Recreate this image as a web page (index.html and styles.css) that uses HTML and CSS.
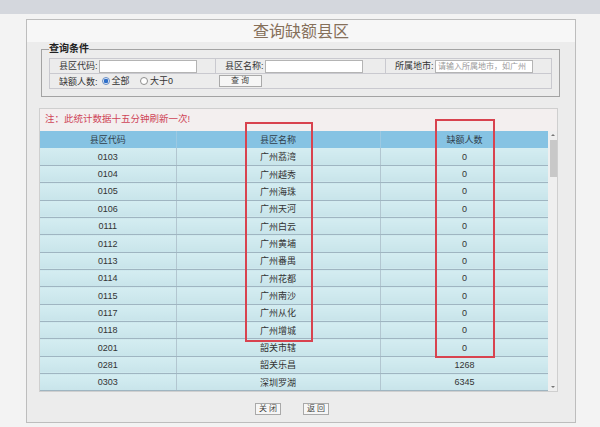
FILE: index.html
```html
<!DOCTYPE html>
<html lang="zh-CN">
<head>
    <meta charset="UTF-8">
    <title>查询缺额县区</title>
    <link rel="stylesheet" href="styles.css">
</head>
<body>

    <!-- 顶部灰条 -->
    <div class="topbar"></div>

    <div class="panel">
        <h1 class="title">查询缺额县区</h1>

        <div class="content">
            <!-- 查询条件 -->
            <fieldset class="query">
                <legend>查询条件</legend>
                <table class="query-table">
                    <tr>
                        <td class="cell-a"><span class="label">县区代码:</span><input type="text" class="field"></td>
                        <td class="cell-b"><span class="label">县区名称:</span><input type="text" class="field"></td>
                        <td class="cell-c"><span class="label">所属地市:</span><input type="text" class="field" placeholder="请输入所属地市，如广州"></td>
                    </tr>
                    <tr class="row-2">
                        <td class="cell-a">
                            <span class="label">缺额人数:</span>
                            <label class="opt"><input type="radio" name="num" checked>全部</label>
                            <label class="opt"><input type="radio" name="num">大于0</label>
                        </td>
                        <td class="cell-btn" colspan="2"><button class="btn btn-query">查 询</button></td>
                    </tr>
                </table>
            </fieldset>

            <!-- 结果列表 -->
            <div class="result">
                <div class="note">注：此统计数据十五分钟刷新一次!</div>
                <div class="grid-wrap">
                    <div class="grid">
                        <table class="data">
                            <thead>
                                <tr><th class="c1">县区代码</th><th class="c2">县区名称</th><th class="c3">缺额人数</th></tr>
                            </thead>
                            <tbody>
                                <tr><td>0103</td><td>广州荔湾</td><td>0</td></tr>
                                <tr><td>0104</td><td>广州越秀</td><td>0</td></tr>
                                <tr><td>0105</td><td>广州海珠</td><td>0</td></tr>
                                <tr><td>0106</td><td>广州天河</td><td>0</td></tr>
                                <tr><td>0111</td><td>广州白云</td><td>0</td></tr>
                                <tr><td>0112</td><td>广州黄埔</td><td>0</td></tr>
                                <tr><td>0113</td><td>广州番禺</td><td>0</td></tr>
                                <tr><td>0114</td><td>广州花都</td><td>0</td></tr>
                                <tr><td>0115</td><td>广州南沙</td><td>0</td></tr>
                                <tr><td>0117</td><td>广州从化</td><td>0</td></tr>
                                <tr><td>0118</td><td>广州增城</td><td>0</td></tr>
                                <tr><td>0201</td><td>韶关市辖</td><td>0</td></tr>
                                <tr><td>0281</td><td>韶关乐昌</td><td>1268</td></tr>
                                <tr><td>0303</td><td>深圳罗湖</td><td>6345</td></tr>
                            </tbody>
                        </table>
                    </div>
                    <!-- 滚动条 -->
                    <div class="scrollbar">
                        <span class="arrow arrow-up"></span>
                        <span class="thumb"></span>
                        <span class="arrow arrow-down"></span>
                    </div>
                </div>
            </div>

            <div class="actions">
                <button class="btn">关 闭</button>
                <button class="btn">返 回</button>
            </div>
        </div>

        <!-- 红色标注框 -->
        <div class="mark mark-name"></div>
        <div class="mark mark-num"></div>
    </div>

</body>
</html>
```

FILE: styles.css
```css
/* 基础 */
* {
    margin: 0;
    padding: 0;
    box-sizing: border-box;
}

body {
    background-color: #f3f3f3;
    font-family: "Liberation Sans", "Noto Sans CJK SC", sans-serif;
    color: #333;
}

.topbar {
    height: 14px;
    background-color: #d4d7dd;
}

/* 主面板 */
.panel {
    position: relative;
    width: 550px;
    margin: 5px 0 0 26px;
    border: 1px solid #bdbdbd;
    background-color: #f7f7f7;
}

.title {
    height: 22px;
    line-height: 23px;
    text-align: center;
    font-size: 16px;
    font-weight: normal;
    color: #86705a;
}

.content {
    background-color: #ececec;
    padding: 1px 0 7px 0;
}

/* 查询条件 */
.query {
    margin: 0 14px 0 14px;
    width: 519px;
    border: 1px solid #a3a3a3;
    padding: 3px 7px 7px 7px;
}

.query legend {
    font-size: 10px;
    font-weight: bold;
    line-height: 12px;
    color: #222;
    margin-left: 0;
    padding: 0;
}

.query-table {
    width: 503px;
    border-collapse: collapse;
    border: 1px solid #c9c9cf;
    font-size: 9px;
}

.query-table td {
    height: 15px;
    padding: 0 0 0 9px;
    vertical-align: middle;
    white-space: nowrap;
}

.query-table tr:first-child td {
    border-right: 1px solid #c9c9cf;
    border-bottom: 1px solid #c9c9cf;
}

.cell-a { width: 166px; }
.cell-b { width: 170px; }

.label {
    display: inline-block;
    width: 40px;
    color: #333;
}

.field {
    width: 98px;
    height: 13px;
    border: 1px solid #b4b4b4;
    background-color: #fff;
    font-size: 8px;
    font-family: inherit;
    padding: 0 2px;
    vertical-align: middle;
}

.field::placeholder {
    color: #9a9a9a;
}

.opt {
    display: inline-flex;
    align-items: center;
    margin-right: 8px;
    color: #333;
}

.opt input {
    appearance: none;
    width: 8px;
    height: 8px;
    border: 1px solid #8e8e8e;
    border-radius: 50%;
    background-color: #fff;
    margin: 0 2px 0 0;
}

.opt input:checked {
    border-color: #6b8fc4;
    background: radial-gradient(circle, #2f6fc9 0 2px, #dfe8f6 2.5px);
}

.row-2 .cell-btn {
    padding-left: 3px;
}

.btn {
    height: 12px;
    padding: 0 6px;
    border: 1px solid #a9a9a9;
    background-color: #f6f6f6;
    font-size: 8px;
    font-family: inherit;
    color: #444;
    line-height: 10px;
}

.btn-query {
    width: 43px;
}

/* 结果 */
.result {
    margin: 11px 17px 0 12px;
    border: 1px solid #cfcfcf;
    background-color: #f3efef;
}

.note {
    height: 22px;
    line-height: 20px;
    padding-left: 5px;
    font-size: 9.5px;
    color: #cf4457;
}

.grid-wrap {
    display: flex;
    height: 260px;
    background-color: #f0f0f0;
}

.grid {
    width: 509px;
    overflow: hidden;
}

.data {
    width: 509px;
    border-collapse: collapse;
    table-layout: fixed;
    font-size: 9px;
    text-align: center;
}

.data th {
    height: 17px;
    font-weight: normal;
    color: #2f3d4a;
    background-color: #86c3e3;
    border-right: 1px solid #9cc9e2;
}

.c1 { width: 136px; }
.c2 { width: 204px; }
.c3 { width: 169px; }

.data tbody tr {
    height: 17.35px;
}

.data td {
    background: linear-gradient(#d4edf1, #c8e4ea);
    border-bottom: 1px solid #9fb5c1;
    border-right: 1px solid #b2c6d0;
    color: #333;
}

/* 模拟滚动条 */
.scrollbar {
    width: 9px;
    position: relative;
    background-color: #efefef;
    display: flex;
    flex-direction: column;
    align-items: center;
}

.arrow {
    width: 0;
    height: 0;
    border-left: 2px solid transparent;
    border-right: 2px solid transparent;
}

.arrow-up {
    margin-top: 3px;
    border-bottom: 2px solid #777;
}

.thumb {
    width: 7px;
    height: 37px;
    margin-top: 4px;
    margin-left: 1px;
    background-color: #c8c8c8;
}

.arrow-down {
    margin-top: auto;
    margin-bottom: 3px;
    border-top: 2px solid #777;
}

/* 底部按钮 */
.actions {
    display: flex;
    justify-content: center;
    gap: 22px;
    margin-top: 11px;
    padding-right: 18px;
}

.actions .btn {
    width: 26px;
    padding: 0;
}

/* 红色标注框 */
.mark {
    position: absolute;
    border: 2px solid #d8434f;
}

.mark-name {
    left: 218px;
    top: 102px;
    width: 68px;
    height: 220px;
}

.mark-num {
    left: 408px;
    top: 99px;
    width: 60px;
    height: 239px;
}
```
